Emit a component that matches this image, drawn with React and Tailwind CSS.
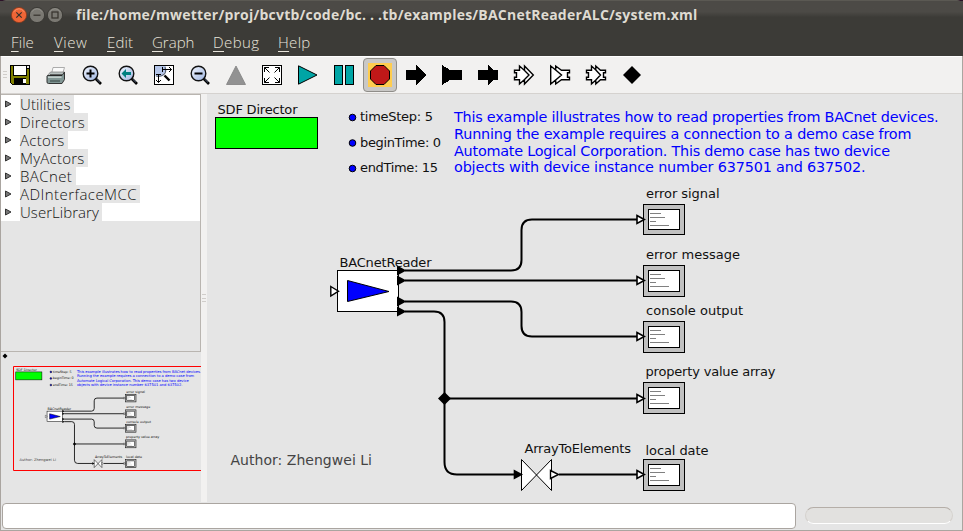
import React from "react";

const dv = "[font-family:'DejaVu_Sans',sans-serif]";

/* ---------- toolbar icons, drawn on a 20 x 20 grid ---------- */

function Icon({ children, crisp = true }) {
  return (
    <svg
      width="24"
      height="24"
      viewBox="-2 -2 24 24"
      shapeRendering={crisp ? "crispEdges" : "auto"}
    >
      {children}
    </svg>
  );
}

function Lens({ children }) {
  return (
    <>
      <defs>
        <linearGradient id="lens" x1="0" y1="0" x2="1" y2="1">
          <stop offset="0" stopColor="#f2f6ff" />
          <stop offset="1" stopColor="#9db4e0" />
        </linearGradient>
      </defs>
      <path d="M13.5 13.5L19 19" stroke="#000" strokeWidth="2.6" />
      <path d="M14.5 14L18 17.4" stroke="#7c8fb4" strokeWidth="0.7" />
      <circle cx="8.5" cy="8.5" r="7.3" fill="url(#lens)" stroke="#111" strokeWidth="1.4" />
      {children}
    </>
  );
}

const icons = [
  <Icon key="save">
    <path d="M0 0H20V20H2L0 18Z" fill="#000" />
    <path d="M1 1H3V11H17V4H19V19H16V13H4V19H2L1 18Z" fill="#808000" />
    <path d="M4 1H16V10H4Z" fill="#fff" />
    <path d="M17 1H19V3H17Z" fill="#e6e6e6" />
    <path d="M13 14H16V18H13Z" fill="#fff" />
  </Icon>,
  <Icon key="print" crisp={false}>
    <path d="M5.5 9L7 2.5H18.5L16.5 9Z" fill="#fafafa" stroke="#999" strokeWidth="0.8" />
    <path d="M1 11L4.5 7H18.5L17 11Z" fill="#b8c0bf" stroke="#777" strokeWidth="0.7" />
    <path d="M1.5 10.5H16L18.5 7V14.5L16 18.5H2.5Q1 18.5 1 17V11Z" fill="#819694" stroke="#333" />
    <path d="M2 12.2H15.5" stroke="#cbd5d2" strokeWidth="1.4" />
    <path d="M4 16H14" stroke="#33413f" />
    <path d="M4 10H16" stroke="#222" strokeWidth="1.2" />
  </Icon>,
  <Icon key="in" crisp={false}>
    <Lens>
      <path d="M8.5 4.5V12.5M4.5 8.5H12.5" stroke="#000" strokeWidth="2" />
    </Lens>
  </Icon>,
  <Icon key="reset" crisp={false}>
    <Lens>
      <path d="M3.5 8.5L8 4V7H13V10H8V13Z" fill="#008080" />
    </Lens>
  </Icon>,
  <Icon key="fit" crisp={false}>
    <rect x="0.5" y="0.5" width="19" height="19" fill="#fff" stroke="#000" />
    <path d="M1 1H11.5Q12.5 7 9 9.5Q6 12 1 10.5Z" fill="#b4c5e8" />
    <path d="M11 2Q13 8 9 10Q6 12 2 11" fill="none" stroke="#555f75" strokeWidth="1.2" />
    <path d="M10.5 10.5L15.5 15.5" stroke="#000" strokeWidth="2.4" />
    <path
      d="M8.5 4.5H17.5M15 2L17.5 4.5L15 7M8.5 2V7M4.5 9V17.5M2 15L4.5 17.5L7 15M2 9.5H7"
      fill="none"
      stroke="#000"
    />
  </Icon>,
  <Icon key="out" crisp={false}>
    <Lens>
      <path d="M4.5 8.5H12.5" stroke="#000" strokeWidth="2" />
    </Lens>
  </Icon>,
  <Icon key="up" crisp={false}>
    <path d="M10 1L19.5 19.5H0.5Z" fill="#929292" stroke="#808080" strokeWidth="0.8" />
  </Icon>,
  <Icon key="full" crisp={false}>
    <rect x="0.5" y="0.5" width="19" height="19" fill="#fff" stroke="#000" />
    <path
      d="M2.5 7V2.5H7M2.5 2.5L7.5 7.5M13 2.5H17.5V7M17.5 2.5L12.5 7.5M2.5 13V17.5H7M2.5 17.5L7.5 12.5M13 17.5H17.5V13M17.5 17.5L12.5 12.5"
      fill="none"
      stroke="#000"
    />
  </Icon>,
  <Icon key="run" crisp={false}>
    <path d="M0.5 0.8L19 10L0.5 19.2Z" fill="#00a5a5" stroke="#000" />
  </Icon>,
  <Icon key="pause">
    <path d="M0.5 0.5H8.5V19.5H0.5ZM11.5 0.5H19.5V19.5H11.5Z" fill="#00a5a5" stroke="#000" />
  </Icon>,
  <Icon key="stop" crisp={false}>
    <rect x="-2" y="-2" width="24" height="24" fill="#ffcd4f" />
    <path
      d="M6 0.5H14L19.5 6V14L14 19.5H6L0.5 14V6Z"
      fill="#c01818"
      stroke="#000"
    />
  </Icon>,
  <Icon key="in-port">
    <path d="M0 5H10V0L20 10L10 20V15H0Z" fill="#000" />
  </Icon>,
  <Icon key="out-port">
    <path d="M0 0L8 5H20V15H8L0 20Z" fill="#000" />
  </Icon>,
  <Icon key="io-port">
    <path d="M0 5H6H10V0L15 5H20V15H15L10 20V15H0Z" fill="#000" />
  </Icon>,
  <Icon key="m-in" crisp={false}>
    <path
      d="M0.5 5H5.5V1L9.5 5V1L19.3 10L9.5 19V15L5.5 19V15H0.5V12H2.5V8H0.5Z"
      fill="#fff"
    />
    <path
      d="M0.5 5.2H5.5V1L10.5 5.5V1L19.3 10L10.5 19V14.5L5.5 19V14.8H0.5V12.2H2.5V7.8H0.5ZM10.5 5.5L15 10L10.5 14.5"
      fill="#fff"
      stroke="#000"
      strokeWidth="1.4"
    />
  </Icon>,
  <Icon key="m-out" crisp={false}>
    <path
      d="M0.7 1L5.7 5V1L11.5 5.2H19.5V7.8H17.5V12.2H19.5V14.8H11.5L5.7 19V15L0.7 19ZM5.7 5L11.5 10L5.7 15"
      fill="#fff"
      stroke="#000"
      strokeWidth="1.4"
    />
  </Icon>,
  <Icon key="m-io" crisp={false}>
    <path
      d="M0.5 5.2H5.5V1L9.8 5V1L14.5 5.2H19.5V7.8H17.5V12.2H19.5V14.8H14.5L9.8 19V15L5.5 19V14.8H0.5V12.2H2.5V7.8H0.5ZM9.8 5L14.5 10L9.8 15"
      fill="#fff"
      stroke="#000"
      strokeWidth="1.4"
    />
  </Icon>,
  <Icon key="relation" crisp={false}>
    <path d="M10 1L19 10L10 19L1 10Z" fill="#000" />
  </Icon>,
];

/* ---------- model graph ---------- */

const monitors = [
  { y: 204.5, h: 30, port: 219.5, label: "error signal", x: 646, w: 73.5, base: 198 },
  { y: 265.5, h: 31, port: 280.5, label: "error message", x: 646, w: 94, base: 259 },
  { y: 321.5, h: 31, port: 336.5, label: "console output", x: 646, w: 97, base: 315 },
  { y: 382.5, h: 31, port: 398.5, label: "property value array", x: 645.5, w: 130, base: 376 },
  { y: 459.5, h: 31, port: 474.5, label: "local date", x: 645.5, w: 63, base: 455 },
];

const params = [
  { label: "timeStep: 5", y: 117.5, base: 121, w: 73 },
  { label: "beginTime: 0", y: 143, base: 146.5, w: 81 },
  { label: "endTime: 15", y: 168.5, base: 172, w: 78 },
];

const notes = [
  { t: "This example illustrates how to read properties from BACnet devices.", y: 122, w: 484.5 },
  { t: "Running the example requires a connection to a demo case from", y: 139, w: 457.5 },
  { t: "Automate Logical Corporation. This demo case has two device", y: 155.5, w: 436 },
  { t: "objects with device instance number 637501 and 637502.", y: 172, w: 411.5 },
];

function Label({ x, y, w, size = 13, fill = "#111", children }) {
  return (
    <text x={x} y={y} textLength={w} fontSize={size} fill={fill}>
      {children}
    </text>
  );
}

function Graph({ wire = 2, edge = 1 }) {
  return (
    <g className={dv}>
      <Label x={217.5} y={113.5} w={80}>SDF Director</Label>
      <rect x="215.5" y="117.5" width="102" height="31" fill="#0f0" stroke="#000" strokeWidth={edge} />

      {params.map((p) => (
        <g key={p.label}>
          <circle cx="352.5" cy={p.y} r="3.3" fill="#00f" stroke="#000" strokeWidth={edge} />
          <Label x={360} y={p.base} w={p.w}>{p.label}</Label>
        </g>
      ))}

      {notes.map((n) => (
        <Label key={n.t} x={454} y={n.y} w={n.w} size={14.4} fill="#00f">{n.t}</Label>
      ))}

      <g fill="none" stroke="#000" strokeWidth={wire}>
        <path d="M405 270.5H511Q521.5 270.5 521.5 260V230Q521.5 219.5 532 219.5H637" />
        <path d="M405 280.5H637" />
        <path d="M405 301.5H511Q521.5 301.5 521.5 312V326Q521.5 336.5 532 336.5H637" />
        <path d="M405 311.5H434Q444.5 311.5 444.5 322V462Q444.5 474.5 457 474.5H515" />
        <path d="M444.5 398.5H637M559 474.5H637" />
      </g>
      <path d="M444.5 392L451 398.5L444.5 405L438 398.5Z" fill="#000" />

      <rect x="337.5" y="270.5" width="61" height="41" fill="#fff" stroke="#000" strokeWidth={edge} />
      <path d="M347.5 280.5L389 291.5L347.5 301.5Z" fill="#00f" stroke="#000" strokeWidth={edge} />
      <path d="M330.8 286.5L338.5 291.2L330.8 296Z" fill="#fff" stroke="#000" strokeWidth="1.4" />
      {[270.5, 280.5, 301.5, 311.5].map((y) => (
        <path key={y} d={`M397 ${y - 5}L406.5 ${y}L397 ${y + 5}Z`} fill="#000" />
      ))}
      <Label x={339.5} y={266.5} w={92}>BACnetReader</Label>

      <path d="M521.5 459.5L551.5 490.5V459.5L521.5 490.5Z" fill="#fff" stroke="#000" strokeWidth={edge} />
      <path d="M513.7 469.5L523 474.5L513.7 479.5Z" fill="#000" />
      <path d="M550.5 470.5L558.5 474.5L550.5 478.5Z" fill="#fff" stroke="#000" strokeWidth="1.4" />
      <Label x={524.5} y={453} w={106.5}>ArrayToElements</Label>

      {monitors.map((m) => (
        <g key={m.label}>
          <rect x="643.5" y={m.y} width="41" height={m.h} fill="#c0c0c0" stroke="#000" strokeWidth={edge} />
          <rect x="648.5" y={m.y + 5} width="31" height={m.h - 10} fill="#fff" stroke="#000" strokeWidth={edge} />
          <path
            d={`M650 ${m.y + 9}h11M650 ${m.y + 13}h15M650 ${m.y + 17}h6M650 ${m.y + 21}h19`}
            stroke="#808080"
          />
          <path
            d={`M637 ${m.port - 4}L644.3 ${m.port}L637 ${m.port + 4}Z`}
            fill="#fff"
            stroke="#000"
            strokeWidth="1.6"
          />
          <Label x={m.x} y={m.base} w={m.w}>{m.label}</Label>
        </g>
      ))}

      <Label x={230.5} y={464.5} w={141.5} size={14} fill="#444">Author: Zhengwei Li</Label>
    </g>
  );
}

/* ---------- window chrome ---------- */

function TitleButton({ kind }) {
  const close = kind === "close";
  return (
    <svg width="18" height="18" viewBox="0 0 18 18">
      <circle
        cx="9"
        cy="9"
        r="7.6"
        fill={close ? "#ee6536" : "#7a7872"}
        stroke={close ? "#8a3a1c" : "#33322e"}
        strokeWidth="0.8"
      />
      <path d="M3.5 6Q9 -0.5 14.5 6" fill="none" stroke={close ? "#f69068" : "#918f89"} />
      <g fill="none" stroke="#35312c" strokeWidth="1.2">
        {close && <path d="M6.3 6.3L11.7 11.7M11.7 6.3L6.3 11.7" />}
        {kind === "min" && <path d="M5.5 9.2H12.5" />}
        {kind === "max" && <rect x="6" y="6" width="6" height="6" />}
      </g>
    </svg>
  );
}

const menus = [
  ["F", "ile", "w-[43px] tracking-[0.1px]"],
  ["V", "iew", "w-[53px] tracking-[0.6px]"],
  ["E", "dit", "w-[45px] tracking-[0.1px]"],
  ["G", "raph", "w-[61px] tracking-[0px]"],
  ["D", "ebug", "w-[65px] tracking-[0.4px]"],
  ["H", "elp", "w-[43px] tracking-[0.3px]"],
];

const tree = [
  ["Utilities", "w-[54px] tracking-[0.1px]"],
  ["Directors", "w-[68px] tracking-[0.35px]"],
  ["Actors", "w-12 tracking-[0.3px]"],
  ["MyActors", "w-[68px] tracking-[0.25px]"],
  ["BACnet", "w-14 tracking-[0.4px]"],
  ["ADInterfaceMCC", "w-[120px] tracking-[0.45px]"],
  ["UserLibrary", "w-[82px] tracking-[0.05px]"],
];

export default function App() {
  return (
    <div className="flex h-[531px] w-[963px] flex-col overflow-hidden bg-[#2c1228]">
      <header className="flex h-14 shrink-0 flex-col rounded-t-[6px] border-t border-[#5b5953] bg-[#3c3b37] [font-family:'Open_Sans',sans-serif]">
        <div className="flex h-[27px] items-center bg-linear-to-b from-[#4c4a46] from-40% to-[#3c3b37] to-60% pl-[10px]">
          <div className="flex">
            <TitleButton kind="close" />
            <TitleButton kind="min" />
            <TitleButton kind="max" />
          </div>
          <h1 className="ml-3 text-[14px] font-bold tracking-[0.22px] whitespace-nowrap text-[#dfdbd2]">
            file:/home/mwetter/proj/bcvtb/code/bc. . .tb/examples/BACnetReaderALC/system.xml
          </h1>
        </div>
        <nav className="flex h-7 items-center pl-[11px] text-[15px] font-light text-[#e8e4db]">
          {menus.map(([k, rest, cls]) => (
            <span key={k} className={`${cls} shrink-0`}>
              <span className="underline underline-offset-3">{k}</span>
              {rest}
            </span>
          ))}
        </nav>
      </header>

      <div className="flex min-h-0 flex-1 flex-col border-x border-b border-[#aaa5a0] bg-[#e5e5e5]">
        <div className="flex h-[38px] shrink-0 items-center border-t border-b border-t-white border-b-[#d5d2cf] bg-[#f2f1f0] pl-px">
          {icons.map((icon) => (
            <span
              key={icon.key}
              className={
                icon.key === "stop"
                  ? "mx-px flex h-[34px] w-[34px] items-center justify-center rounded-[4px] border border-[#8f8d89] bg-[#c9c8c6]"
                  : icon.key === "save"
                    ? "flex w-9 items-center justify-center bg-[repeating-linear-gradient(to_bottom,#d0cdca_0_1px,transparent_1px_3px)] bg-[length:4px_8px] bg-[position:1px_center] bg-no-repeat"
                    : "flex w-9 items-center justify-center"
              }
            >
              {icon}
            </span>
          ))}
        </div>

        <main className="flex h-[408px] shrink-0">
          <aside className="flex w-[200px] shrink-0 flex-col">
            <div className="h-[258px] border border-l-0 border-[#b9b5b0]">
              <ul className="bg-white text-[15px] font-light text-[#111] [font-family:'Open_Sans',sans-serif]">
                {tree.map(([name, w]) => (
                  <li key={name} className="flex h-[18px] items-center">
                    <svg width="19" height="18" viewBox="0 0 19 18" className="shrink-0">
                      <path d="M4.5 6L10 9L4.5 12Z" fill="#777" stroke="#333" />
                    </svg>
                    <span className={`${w} h-[18px] bg-[#e5e5e5] leading-[18px] whitespace-nowrap`}>
                      {name}
                    </span>
                  </li>
                ))}
              </ul>
            </div>
            <svg width="200" height="150" viewBox="1 352 200 150">
              <path d="M5 353.5L7.5 356L5 358.5L2.5 356Z" fill="#000" />
              <g transform="translate(-39.5 341.8) scale(0.2564)">
                <Graph wire={3.2} edge={2} />
              </g>
              <path d="M201 366.5H13.5V470.5H201" fill="none" stroke="#f00" />
            </svg>
          </aside>
          <div className="flex w-[6px] shrink-0 items-center justify-center bg-[#f2f1f0]">
            <span className="flex h-2 w-1 flex-col justify-center border-y border-[#d0cdca]">
              <span className="h-px bg-[#d0cdca]" />
            </span>
          </div>
          <svg width="755" height="408" viewBox="207 94 755 408" className="shrink-0">
            <Graph />
          </svg>
        </main>

        <footer className="flex flex-1 pt-px pl-px">
          <div className="h-[26px] w-[794px] rounded-[4px] border border-[#aaa5a0] bg-white" />
          <div className="mt-[4px] ml-[9px] h-[17px] w-[148px] rounded-full border border-[#d5d2ce] border-t-[#b5aea8] border-b-white bg-[#e2e1df]" />
        </footer>
      </div>
    </div>
  );
}
